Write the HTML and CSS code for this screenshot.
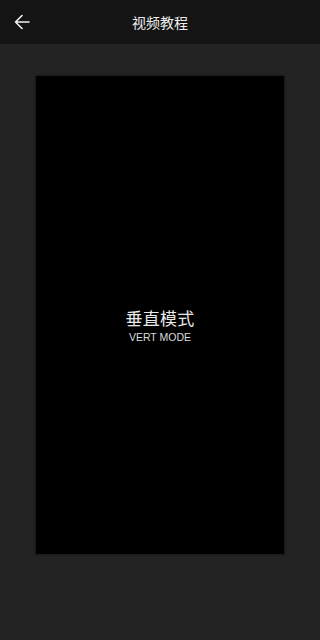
FILE: index.html
```html
<!DOCTYPE html>
<html lang="zh">
<head>
<meta charset="utf-8">
<title>视频教程</title>
<link rel="stylesheet" href="styles.css">
</head>
<body>
<header class="topbar">
  <button class="back" aria-label="返回">
    <svg width="16" height="16" viewBox="0 0 16 16"><path d="M15 8H1.5M8 1.5L1.5 8L8 14.5" fill="none" stroke="#f2f2f2" stroke-width="1.6" stroke-linecap="round" stroke-linejoin="round"/></svg>
  </button>
  <h1 class="title">视频教程</h1>
</header>
<main class="content">
  <div class="video">
    <div class="mode">
      <div class="mode-cn">垂直模式</div>
      <div class="mode-en">VERT MODE</div>
    </div>
  </div>
</main>
</body>
</html>
```
FILE: styles.css
```css
html, body {
  margin: 0;
  padding: 0;
  width: 320px;
  height: 640px;
  overflow: hidden;
  background: #232323;
  font-family: "Noto Sans CJK SC", "Liberation Sans", sans-serif;
}
.topbar {
  height: 44px;
  background: #141414;
  display: flex;
  align-items: center;
  justify-content: center;
  position: relative;
}
.back {
  position: absolute;
  left: 14px;
  top: 14px;
  width: 16px;
  height: 16px;
  padding: 0;
  border: 0;
  background: none;
  display: flex;
}
.title {
  margin: 0;
  font-size: 14px;
  font-weight: normal;
  color: #eeeeee;
  line-height: 20px;
}
.content {
  padding: 32px 36px 86px;
}
.video {
  height: 478px;
  box-sizing: border-box;
  background: #000;
  box-shadow: 0 0 2px 1px rgba(0,0,0,0.35);
  display: flex;
  align-items: center;
  justify-content: center;
  padding-top: 21px;
}
.mode {
  text-align: center;
  color: #e8e8e8;
}
.mode-cn {
  font-size: 17px;
  line-height: 20px;
  letter-spacing: 0.3px;
}
.mode-en {
  font-family: "Liberation Sans", sans-serif;
  font-size: 10.5px;
  line-height: 12px;
  margin-top: 3px;
  color: #dcdcdc;
}
```
